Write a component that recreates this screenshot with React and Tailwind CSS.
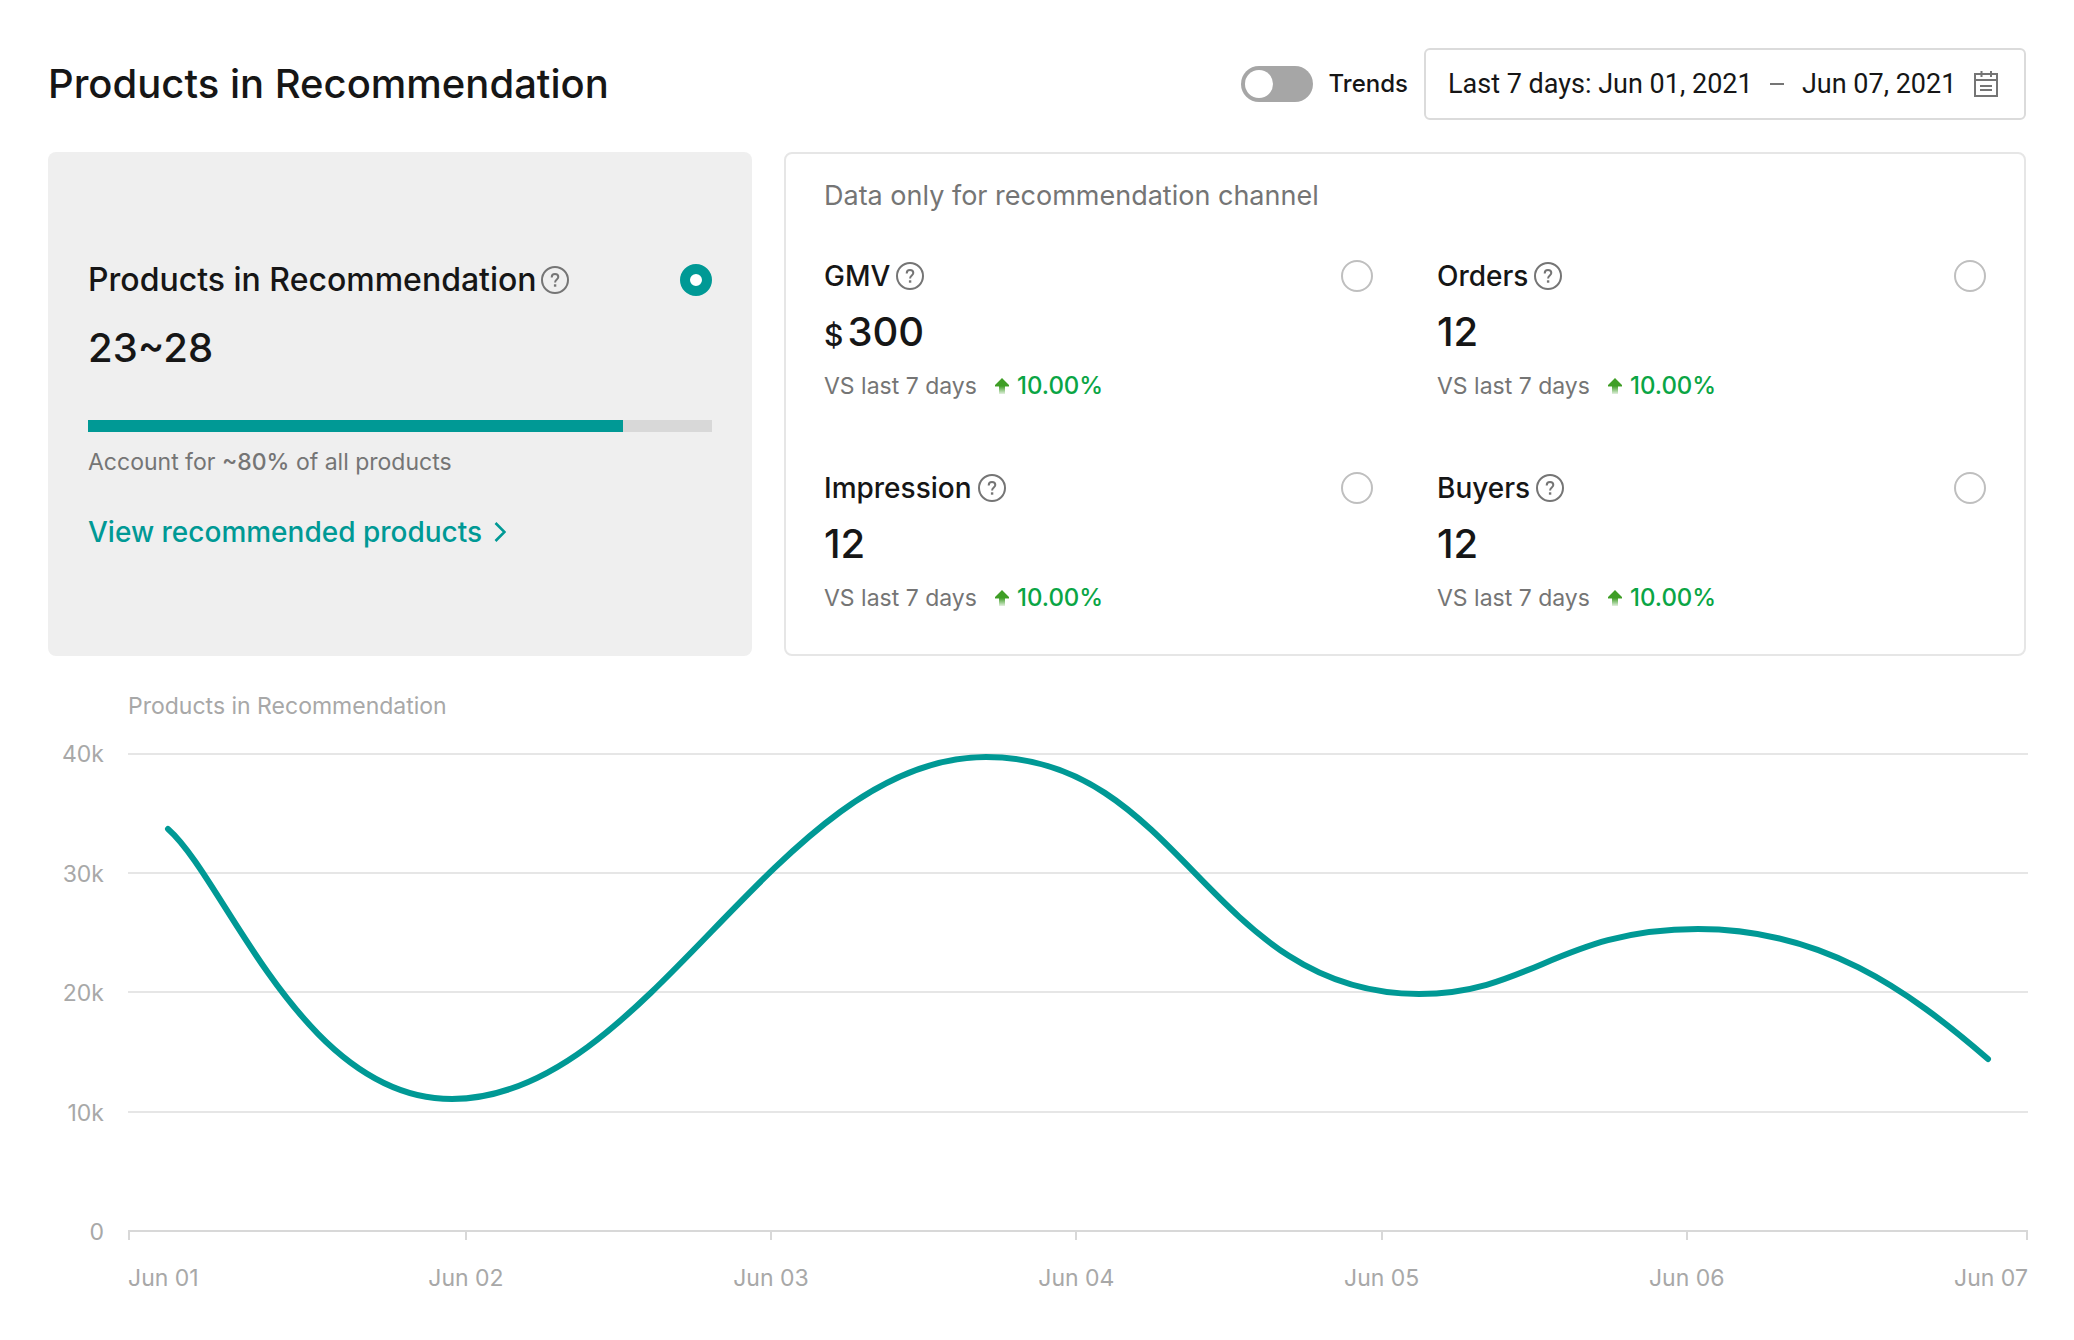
import React, { useState } from "react";

const metrics = [
  { id: "gmv", label: "GMV", currency: "$", value: "300", change: "10.00%" },
  { id: "orders", label: "Orders", value: "12", change: "10.00%" },
  { id: "impression", label: "Impression", value: "12", change: "10.00%" },
  { id: "buyers", label: "Buyers", value: "12", change: "10.00%" },
];

const yLabels = ["40k", "30k", "20k", "10k", "0"];
const xLabels = ["Jun 01", "Jun 02", "Jun 03", "Jun 04", "Jun 05", "Jun 06", "Jun 07"];

const HelpIcon = () => (
  <svg
    viewBox="0 0 28 28"
    className="size-7 shrink-0 text-[#757575]"
    fill="none"
    stroke="currentColor"
    strokeWidth="2"
    aria-hidden="true"
  >
    <circle cx="14" cy="14" r="13" />
    <path d="M10.7 11.4c0-2 1.4-3.3 3.3-3.3s3.3 1.2 3.3 3c0 2.4-3.2 2.5-3.2 5.3" />
    <path d="M14.1 18.3v2.4" strokeWidth="2.4" />
  </svg>
);

const CalendarIcon = () => (
  <svg
    viewBox="0 0 24 26"
    className="h-[26px] w-6 shrink-0 text-[#757575]"
    fill="none"
    stroke="currentColor"
    strokeWidth="2"
    aria-hidden="true"
  >
    <path d="M1 3h22v22H1zM1 9h22M7.5 0v6M17 0v6M6 15h12M6 19h12" />
  </svg>
);

const UpIcon = () => (
  <svg viewBox="0 0 14 16" className="h-4 w-3.5 shrink-0" aria-hidden="true">
    <defs>
      <linearGradient id="up-fade" x1="0" y1="0" x2="0" y2="1">
        <stop offset="0.5" stopColor="#3f9e26" />
        <stop offset="1" stopColor="#3f9e26" stopOpacity="0.15" />
      </linearGradient>
    </defs>
    <path d="M7 0l7 7v1.5h-4V16H4V8.500H0V7z" fill="url(#up-fade)" />
  </svg>
);

const MetricRadio = ({ id, selected, onSelect }) => (
  <input
    type="radio"
    id={id}
    name="metric"
    checked={selected === id}
    onChange={() => onSelect(id)}
    className="size-8 shrink-0 cursor-pointer appearance-none rounded-full border-2 border-[#bfbfbf] bg-white checked:border-[10px] checked:border-[#009995]"
  />
);

const Metric = ({ metric, selected, onSelect }) => (
  <div>
    <div className="flex h-9 items-center justify-between">
      <label
        htmlFor={metric.id}
        className="flex items-center gap-1.5 text-[28px] leading-9 font-medium"
      >
        {metric.label}
        <HelpIcon />
      </label>
      <MetricRadio id={metric.id} selected={selected} onSelect={onSelect} />
    </div>
    <p className="mt-3.5 flex items-baseline gap-1 text-[40px] leading-12 font-medium">
      {metric.currency && (
        <span className="text-3xl leading-none">{metric.currency}</span>
      )}
      {metric.value}
    </p>
    <p className="mt-3.5 flex items-center text-[23px] leading-8 text-[#757575]">
      VS last 7 days
      <span className="ml-4.5 flex items-center gap-2 text-2xl font-medium text-[#0aa545]">
        <UpIcon />
        {metric.change}
      </span>
    </p>
  </div>
);

const TrendChart = () => (
  <section className="mt-[34px] -mr-0.5">
    <h2 className="ml-20 text-[23px] leading-8 text-[#a8a8a8]">
      Products in Recommendation
    </h2>
    <div className="mt-4 flex gap-6 text-[23px] leading-8 text-[#a8a8a8]">
      {/* Y axis */}
      <div className="flex h-[510px] w-14 flex-col justify-between text-right">
        {yLabels.map((label) => (
          <span key={label}>{label}</span>
        ))}
      </div>

      {/* Plot and X axis */}
      <div className="flex-1 pt-[15px]">
        <svg
          viewBox="0 0 1900 479"
          preserveAspectRatio="none"
          className="h-[479px] w-full overflow-visible"
          fill="none"
          role="img"
          aria-label="Products in Recommendation, Jun 01 to Jun 07"
        >
          <path
            d="M0 1h1900M0 120h1900M0 239h1900M0 359h1900"
            stroke="#e6e6e6"
            strokeWidth="2"
          />
          <path d="M0 478h1900" stroke="#d8d8d8" strokeWidth="2" />
          <path
            d="M40 76C98 127 174 346 324 346C522 346 649 4 858 4C1053 4 1082 241 1291 241C1402 241 1432 176 1570 176C1693 176 1778 235 1860 306"
            stroke="#009995"
            strokeWidth="6"
            strokeLinecap="round"
            vectorEffect="non-scaling-stroke"
          />
        </svg>
        <div className="flex justify-between">
          {xLabels.map((label) => (
            <div
              key={label}
              className="flex flex-col items-center gap-[22px] first:items-start last:items-end"
            >
              <span className="h-2 w-0.5 bg-[#d8d8d8]" />
              <span>{label}</span>
            </div>
          ))}
        </div>
      </div>
    </div>
  </section>
);

const App = () => {
  const [selected, setSelected] = useState("products");
  const [trends, setTrends] = useState(false);

  return (
    <main className="min-h-screen bg-white p-12 font-[Inter,'Liberation_Sans',sans-serif] text-[#161616]">
      {/* Header */}
      <header className="flex items-center justify-between">
        <h1 className="text-[40px] leading-12 font-medium">
          Products in Recommendation
        </h1>
        <div className="flex items-center gap-4">
          <label className="flex cursor-pointer items-center gap-4 text-2xl font-medium">
            <input
              type="checkbox"
              role="switch"
              checked={trends}
              onChange={(e) => setTrends(e.target.checked)}
              className="flex h-9 w-18 appearance-none items-center rounded-full bg-[#a6a6a6] px-1 before:size-7 before:rounded-full before:bg-white checked:justify-end checked:bg-[#009995]"
            />
            Trends
          </label>
          <button
            type="button"
            className="flex h-18 w-[602px] items-center justify-between rounded-md border-2 border-[#dbdbdb] pr-[26px] pl-5.5 font-[Roboto,'Liberation_Sans',sans-serif] text-[27px] leading-9"
          >
            <span>Last 7 days: Jun 01, 2021</span>
            <span className="h-0.5 w-3.5 bg-[#757575]" />
            <span>Jun 07, 2021</span>
            <CalendarIcon />
          </button>
        </div>
      </header>

      {/* Summary cards */}
      <div className="mt-8 grid grid-cols-[704fr_1242fr] gap-8">
        <section className="flex flex-col justify-center rounded-lg bg-[#efefef] px-10 pt-0.5">
          <div className="flex items-center justify-between">
            <label
              htmlFor="products"
              className="flex items-center gap-1 text-[32px] leading-10 font-medium"
            >
              Products in Recommendation
              <HelpIcon />
            </label>
            <MetricRadio id="products" selected={selected} onSelect={setSelected} />
          </div>
          <p className="mt-6 text-[40px] leading-12 font-medium">23~28</p>
          <div className="mt-12 h-3 bg-[#d8d8d8]">
            <div className="h-full w-6/7 bg-[#009995]" />
          </div>
          <p className="mt-3.5 text-[23px] leading-8 text-[#757575]">
            Account for <span className="font-medium">~80%</span> of all products
          </p>
          <a
            href="#products"
            className="mt-9 flex items-center gap-3 text-[28px] leading-9 font-medium text-[#009995]"
          >
            View recommended products
            <svg
              viewBox="0 0 12 20"
              className="h-5 w-3"
              fill="none"
              stroke="currentColor"
              strokeWidth="2.6"
              aria-hidden="true"
            >
              <path d="M1.500 1l9 9l-9 9" />
            </svg>
          </a>
        </section>

        <section className="rounded-lg border-2 border-[#e6e6e6] px-[38px] pt-6 pb-10">
          <h2 className="text-[27px] leading-9 text-[#757575]">
            Data only for recommendation channel
          </h2>
          <div className="mt-11 grid grid-cols-2 gap-x-16 gap-y-17">
            {metrics.map((metric) => (
              <Metric
                key={metric.id}
                metric={metric}
                selected={selected}
                onSelect={setSelected}
              />
            ))}
          </div>
        </section>
      </div>

      <TrendChart />
    </main>
  );
};

export default App;
